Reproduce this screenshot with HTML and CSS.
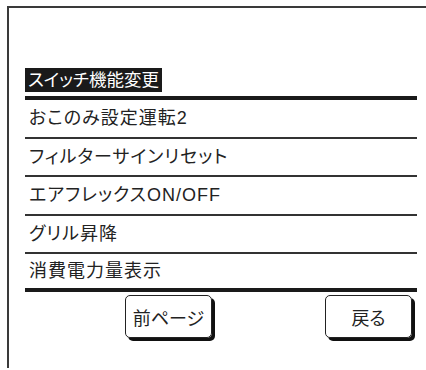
FILE: index.html
```
<!DOCTYPE html>
<html>

	<head>
		<meta charset="utf-8">
		<title>スイッチ機能変更</title>
		<link rel="stylesheet" href="styles.css">
	</head>

	<body>
		<div id="frame">
			<div class="title">スイッチ機能変更</div>
			<ul class="menu">
				<li>おこのみ設定運転2</li>
				<li>フィルターサインリセット</li>
				<li>エアフレックスON/OFF</li>
				<li>グリル昇降</li>
				<li>消費電力量表示</li>
			</ul>
			<div class="buttons">
				<a href="#" class="btn">前ページ</a>
				<a href="#" class="btn">戻る</a>
			</div>
		</div>
	</body>

</html>
```

FILE: styles.css
```
html, body {
	margin: 0;
	padding: 0;
	background: #fff;
}
body {
	font-family: "Liberation Sans", "Noto Sans CJK JP", sans-serif;
	font-feature-settings: "palt";
	color: #222;
	overflow: hidden;
}
#frame {
	margin: 6px 0 0 7px;
	border-top: 2px solid #3a3a3a;
	border-left: 2px solid #3a3a3a;
	height: 362px;
	padding: 60px 9px 0 16px;
	box-sizing: border-box;
}
.title {
	display: inline-block;
	height: 24px;
	line-height: 24px;
	padding: 0 3px;
	font-size: 17.5px;
	background: #1a1a1a;
	color: #fff;
}
.menu {
	margin: 4px 0 0 0;
	padding: 0;
	list-style: none;
	border-top: 4px solid #1a1a1a;
}
.menu li {
	height: 36.5px;
	line-height: 36.5px;
	padding-left: 4px;
	font-size: 18px;
	letter-spacing: 1px;
	border-bottom: 2px solid #333;
}
.menu li:last-child {
	height: 34px;
	line-height: 34px;
	border-bottom: 4px solid #1a1a1a;
}
.buttons {
	display: flex;
	gap: 113px;
	margin: 3px 0 0 100px;
}
.btn {
	display: flex;
	align-items: center;
	justify-content: center;
	width: 87px;
	height: 43px;
	box-sizing: border-box;
	border: 1.5px solid #222;
	border-radius: 5px;
	box-shadow: 3px 3px 0 #111;
	font-size: 18px;
	color: #222;
	text-decoration: none;
}
```
